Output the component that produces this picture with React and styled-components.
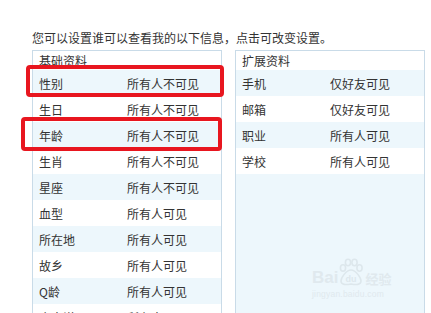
import React from "react";
import styled, { createGlobalStyle } from "styled-components";

const Global = createGlobalStyle`
  html, body { margin: 0; padding: 0; background: #fff; }
  body { font-family: "Noto Sans CJK SC", "Noto Sans", sans-serif; color: #333; overflow: hidden; }
`;

const Page = styled.div`
  position: relative;
  width: 431px;
  height: 313px;
  overflow: hidden;
  padding: 30px 0 0 32px;
  box-sizing: border-box;
`;

const Intro = styled.div`
  font-size: 12px;
  line-height: 16px;
  height: 20px;
  color: #333;
  white-space: nowrap;
`;

const Panels = styled.div`
  display: flex;
  gap: 13px;
  align-items: stretch;
`;

const Panel = styled.div`
  width: ${(p) => p.$w}px;
  height: 300px;
  border: 1px solid #c9dbe8;
  background: ${(p) => (p.$fill ? "#edf7fc" : "#fff")};
  box-sizing: border-box;
  display: flex;
  flex-direction: column;
`;

const Header = styled.div`
  height: 19px;
  line-height: 19px;
  padding-left: 6px;
  font-size: 12px;
  background: #fff;
  flex: none;
`;

const Row = styled.div`
  display: flex;
  height: 26px;
  align-items: center;
  padding-left: 6px;
  font-size: 12px;
  flex: none;
  background: ${(p) => (p.$alt ? "#edf7fc" : "#fff")};
`;

const Label = styled.span`
  width: 88px;
  flex: none;
`;

const Value = styled.span``;

const Mark = styled.div`
  position: absolute;
  border: 4px solid #e8161f;
  border-radius: 4px;
  box-sizing: border-box;
`;

const Watermark = styled.div`
  position: absolute;
  left: 312px;
  top: 258px;
  width: 92px;
  color: #e0e9ee;
  font-family: "Liberation Sans", sans-serif;
`;

const WmTop = styled.div`
  display: flex;
  align-items: flex-end;
  height: 28px;
`;

const WmBai = styled.span`
  font-size: 17px;
  font-weight: bold;
  line-height: 17px;
`;

const WmCn = styled.span`
  font-family: "Noto Sans CJK SC", sans-serif;
  font-size: 13px;
  line-height: 15px;
  font-weight: bold;
  margin-left: 1px;
`;

const WmUrl = styled.div`
  font-size: 8.5px;
  line-height: 12px;
  margin-top: 2px;
  letter-spacing: 0.2px;
`;

const left = [
  ["性别", "所有人不可见"],
  ["生日", "所有人不可见"],
  ["年龄", "所有人不可见"],
  ["生肖", "所有人不可见"],
  ["星座", "所有人不可见"],
  ["血型", "所有人可见"],
  ["所在地", "所有人可见"],
  ["故乡", "所有人可见"],
  ["Q龄", "所有人可见"],
  ["个人说明", "所有人可见"],
];

const right = [
  ["手机", "仅好友可见"],
  ["邮箱", "仅好友可见"],
  ["职业", "所有人可见"],
  ["学校", "所有人可见"],
];

function Paw() {
  return (
    <svg width="26" height="28" viewBox="0 0 26 28" fill="none" stroke="#dde7ec" strokeWidth="1.6">
      <ellipse cx="5" cy="10" rx="2.6" ry="3.2" />
      <ellipse cx="10" cy="4.5" rx="2.6" ry="3.2" />
      <ellipse cx="16.5" cy="4.5" rx="2.6" ry="3.2" />
      <ellipse cx="21.5" cy="10" rx="2.6" ry="3.2" />
      <path d="M13 12 C8 12 3 20 3 23 C3 27 8 27 13 26 C18 27 23 27 23 23 C23 20 18 12 13 12 Z" />
      <text x="13" y="24" textAnchor="middle" fontSize="9" fontWeight="bold" fill="#dde7ec" stroke="none" fontFamily="Liberation Sans, sans-serif">du</text>
    </svg>
  );
}

export default function App() {
  return (
    <>
      <Global />
      <Page>
        <Intro>您可以设置谁可以查看我的以下信息，点击可改变设置。</Intro>
        <Panels>
          <Panel $w={190}>
            <Header>基础资料</Header>
            {left.map(([k, v], i) => (
              <Row key={k} $alt={i % 2 === 0}>
                <Label>{k}</Label>
                <Value>{v}</Value>
              </Row>
            ))}
          </Panel>
          <Panel $w={190} $fill>
            <Header>扩展资料</Header>
            {right.map(([k, v], i) => (
              <Row key={k} $alt={i % 2 === 0}>
                <Label>{k}</Label>
                <Value>{v}</Value>
              </Row>
            ))}
          </Panel>
        </Panels>
        <Mark style={{ left: 26, top: 65, width: 198, height: 32 }} />
        <Mark style={{ left: 21, top: 117, width: 201, height: 34 }} />
        <Watermark>
          <WmTop>
            <WmBai>Bai</WmBai>
            <Paw />
            <WmCn>经验</WmCn>
          </WmTop>
          <WmUrl>jingyan.baidu.com</WmUrl>
        </Watermark>
      </Page>
    </>
  );
}
